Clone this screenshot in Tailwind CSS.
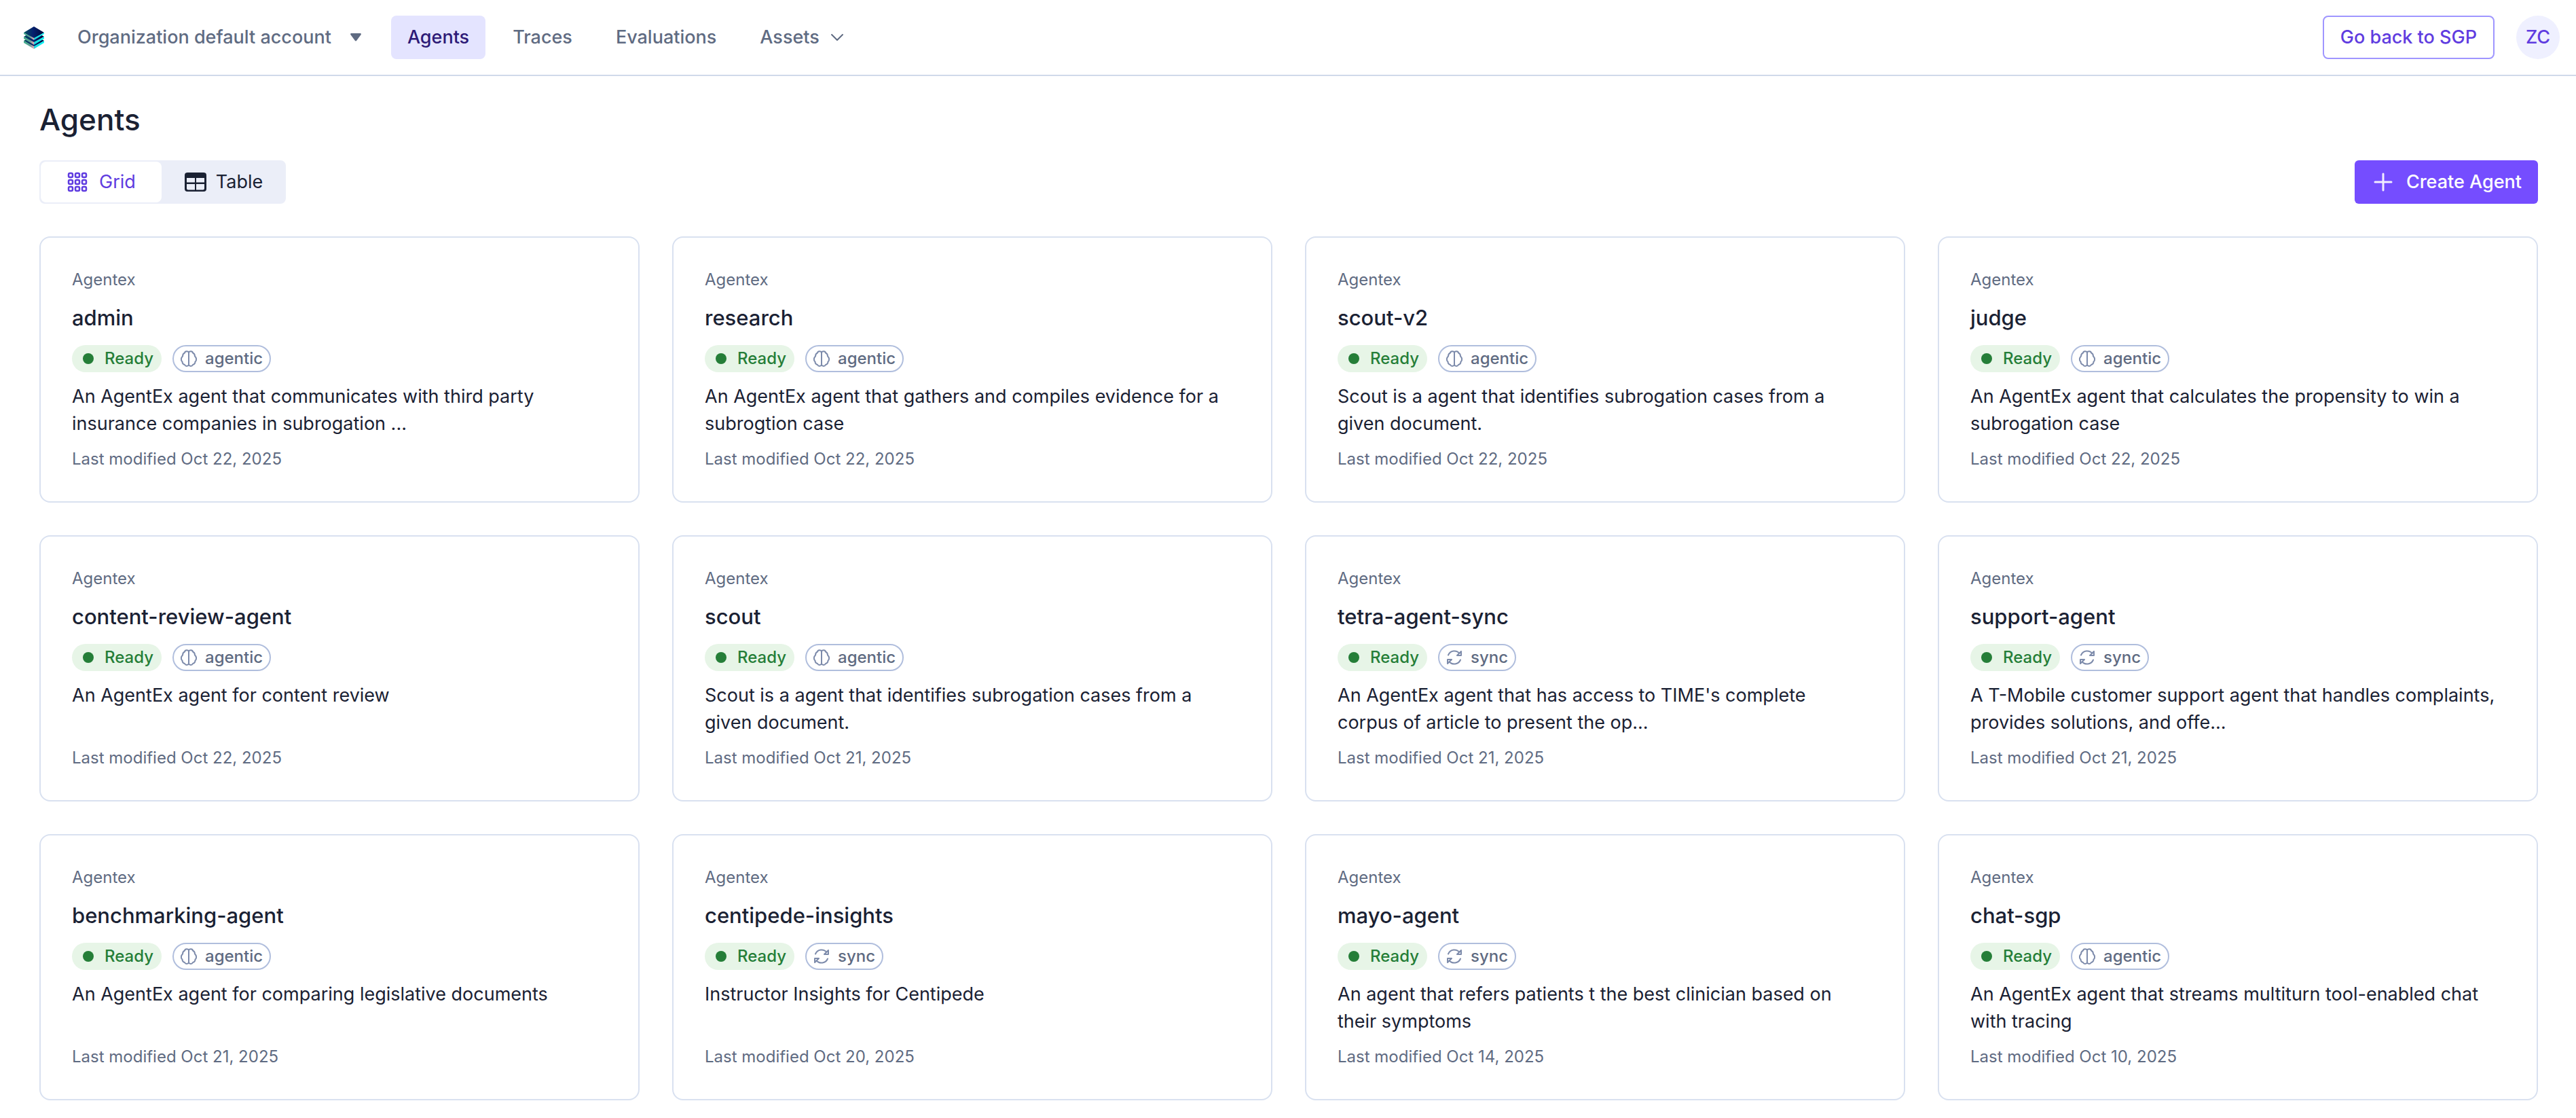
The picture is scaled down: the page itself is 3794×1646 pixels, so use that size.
<!DOCTYPE html>
<html lang="en">
<head>
  <meta charset="UTF-8" />
  <meta name="viewport" content="width=device-width, initial-scale=1.0"/>
  <title>Agents</title>
  <script src="https://cdn.jsdelivr.net/npm/@tailwindcss/browser@4"></script>
  <style>
    body {
      font-family: Inter, "Liberation Sans", sans-serif;
    }
  </style>
</head>
<body class="bg-white text-[#1a2133] text-[27px] leading-10">

  <!-- Top bar -->
  <header class="flex items-center justify-between border-b-2 border-[#d0d9ea] pl-[34px] pr-6 py-[23px]">
    <div class="flex items-center">
      <a href="#" aria-label="Home" class="mr-12">
        <svg class="w-8 h-9" viewBox="0 0 32 36">
          <defs>
            <linearGradient id="top" x1="0" y1="0" x2="1" y2="0">
              <stop offset="0" stop-color="#06505f"/>
              <stop offset="0.45" stop-color="#04216e"/>
              <stop offset="1" stop-color="#020638"/>
            </linearGradient>
            <linearGradient id="left" x1="0" y1="0" x2="1" y2="0">
              <stop offset="0" stop-color="#3fb08c"/>
              <stop offset="0.6" stop-color="#5f9d92"/>
              <stop offset="1" stop-color="#f2a3b5"/>
            </linearGradient>
            <linearGradient id="right" x1="0" y1="0" x2="1" y2="0">
              <stop offset="0" stop-color="#1fd6dc"/>
              <stop offset="1" stop-color="#0ff5f5"/>
            </linearGradient>
          </defs>
          <path d="M1 23l15-9 15 9-15 9z" fill="url(#top)"/>
          <path d="M1 23l15 8v4L1 26z" fill="url(#left)"/>
          <path d="M31 23l-15 8v4l15-9z" fill="url(#right)"/>
          <path d="M1 17l15-9 15 9-15 9z" fill="url(#top)"/>
          <path d="M1 17l15 8v4L1 20z" fill="url(#left)"/>
          <path d="M31 17l-15 8v4l15-9z" fill="url(#right)"/>
          <path d="M1 11L16 2l15 9-15 9z" fill="url(#top)"/>
          <path d="M1 11l15 8v3L1 13z" fill="url(#left)"/>
          <path d="M31 11l-15 8v3l15-9z" fill="url(#right)"/>
        </svg>
      </a>
      <button type="button" class="flex items-center gap-7 mr-11 font-medium text-[#5f6b82]">
        Organization default account
        <svg class="w-4 h-3" viewBox="0 0 16 12" fill="#5f6b82"><path d="M1.500 0h13c1.200 0 1.800 1.200 1 2.200L9.200 10.800c-.6.800-1.800.8-2.400 0L.5 2.200C-.3 1.200.3 0 1.500 0z"/></svg>
      </button>
      <nav class="flex items-center gap-4 font-medium text-[#5f6b82]">
        <a href="#" class="rounded-lg bg-[#e4e4ff] px-6 py-3 text-[#2d1a77]">Agents</a>
        <a href="#" class="px-6 py-3">Traces</a>
        <a href="#" class="px-6 py-3">Evaluations</a>
        <button type="button" class="flex items-center gap-4 px-6 py-3">
          Assets
          <svg class="w-5 h-3" viewBox="0 0 20 12" fill="none" stroke="#5f6b82" stroke-width="2" stroke-linecap="round" stroke-linejoin="round"><path d="M2 2l8 8 8-8"/></svg>
        </button>
      </nav>
    </div>
    <div class="flex items-center gap-8">
      <button type="button" class="rounded-lg border-2 border-[#9f96ff] px-6 py-[10px] font-medium text-[#5f3ce0]">Go back to SGP</button>
      <button type="button" class="size-16 rounded-full bg-[#eff0ff] font-medium text-[#5f3ce0]">ZC</button>
    </div>
  </header>

  <main class="pl-[58px] pr-14 pt-8 pb-6">
    <h1 class="text-[44px] leading-16 font-medium">Agents</h1>

    <!-- View switch and create button -->
    <div class="flex items-center justify-between mt-7 mb-12">
      <div class="flex rounded-lg border-2 border-[#ebeef8] bg-[#ebeef8]">
        <button type="button" class="flex items-center gap-4 rounded-lg bg-white px-[38px] py-[10px] text-[#5f3ce0]">
          <svg class="w-8 h-8" viewBox="0 0 32 32" fill="none" stroke="#5f3ce0" stroke-width="2.500">
            <rect x="3" y="3" width="6" height="6" rx="2"/><rect x="13" y="3" width="6" height="6" rx="2"/><rect x="23" y="3" width="6" height="6" rx="2"/>
            <rect x="3" y="13" width="6" height="6" rx="2"/><rect x="13" y="13" width="6" height="6" rx="2"/><rect x="23" y="13" width="6" height="6" rx="2"/>
            <rect x="3" y="23" width="6" height="6" rx="2"/><rect x="13" y="23" width="6" height="6" rx="2"/><rect x="23" y="23" width="6" height="6" rx="2"/>
          </svg>
          Grid
        </button>
        <button type="button" class="flex items-center gap-3 px-8 py-[10px]">
          <svg class="w-9 h-8" viewBox="0 0 36 32">
            <path fill="#1a2133" fill-rule="evenodd" d="M6 2h24a4 4 0 0 1 4 4v20a4 4 0 0 1-4 4H6a4 4 0 0 1-4-4V6a4 4 0 0 1 4-4zM5 10v6.500h12V10zM19 10v6.500h12V10zM5 19v6.500a2 2 0 0 0 2 2h10V19zM19 19v8.500h10a2 2 0 0 0 2-2V19z"/>
          </svg>
          Table
        </button>
      </div>
      <button type="button" class="flex items-center gap-4 rounded-md bg-[#754dff] px-6 py-3 font-medium text-white">
        <svg class="w-9 h-9" viewBox="0 0 36 36" fill="none" stroke="#f1ecff" stroke-width="3" stroke-linecap="round"><path d="M18 6v24M6 18h24"/></svg>
        Create Agent
      </button>
    </div>

    <!-- Agent cards -->
    <div id="agentGrid" class="grid grid-cols-4 gap-12"></div>
  </main>

  <script>
    const agents = [
      { name: "admin", type: "agentic", text: "An AgentEx agent that communicates with third party insurance companies in subrogation ...", date: "Oct 22, 2025" },
      { name: "research", type: "agentic", text: "An AgentEx agent that gathers and compiles evidence for a subrogtion case", date: "Oct 22, 2025" },
      { name: "scout-v2", type: "agentic", text: "Scout is a agent that identifies subrogation cases from a given document.", date: "Oct 22, 2025" },
      { name: "judge", type: "agentic", text: "An AgentEx agent that calculates the propensity to win a subrogation case", date: "Oct 22, 2025" },
      { name: "content-review-agent", type: "agentic", text: "An AgentEx agent for content review", date: "Oct 22, 2025" },
      { name: "scout", type: "agentic", text: "Scout is a agent that identifies subrogation cases from a given document.", date: "Oct 21, 2025" },
      { name: "tetra-agent-sync", type: "sync", text: "An AgentEx agent that has access to TIME's complete corpus of article to present the op...", date: "Oct 21, 2025" },
      { name: "support-agent", type: "sync", text: "A T-Mobile customer support agent that handles complaints, provides solutions, and offe...", date: "Oct 21, 2025" },
      { name: "benchmarking-agent", type: "agentic", text: "An AgentEx agent for comparing legislative documents", date: "Oct 21, 2025" },
      { name: "centipede-insights", type: "sync", text: "Instructor Insights for Centipede", date: "Oct 20, 2025" },
      { name: "mayo-agent", type: "sync", text: "An agent that refers patients t the best clinician based on their symptoms", date: "Oct 14, 2025" },
      { name: "chat-sgp", type: "agentic", text: "An AgentEx agent that streams multiturn tool-enabled chat with tracing", date: "Oct 10, 2025" }
    ];

    const icons = {
      agentic: `<svg class="size-6" viewBox="0 0 24 24" fill="none" stroke="#7d8bab" stroke-width="2" stroke-linejoin="round">
        <path d="M12 3C11 .5 6.500.5 6 3.500 3.500 4.500 3 7 3 8.500 0 11 .5 15 2.500 16.500 2.500 19 4 20.500 6 21c1 2.500 5 2.500 6 0zM12 3c1-2.500 5.500-2.500 6 .5 2.500 1 3 3.500 3 5 3 2.500 2.500 6.500.5 8 0 2.500-1.500 4-3.500 4.500-1 2.500-5 2.500-6 0z"/>
      </svg>`,
      sync: `<svg class="size-6" viewBox="0 0 24 24" fill="none" stroke="#7d8bab" stroke-width="2" stroke-linecap="round" stroke-linejoin="round">
        <path d="M3 8.500C6 1.500 15 .500 19.500 6M22 3v6h-6zM21 15.500C18 22.500 9 23.500 4.500 18M2 21v-6h6z"/>
      </svg>`
    };

    document.getElementById("agentGrid").innerHTML = agents.map(a => `
      <article class="flex flex-col gap-4 rounded-2xl border-2 border-[#d9e1f0] p-[46px]">
        <p class="text-[24px] leading-8 text-[#5f6b82]">Agentex</p>
        <h2 class="text-[31px] leading-12 font-medium">${a.name}</h2>
        <div class="flex gap-4 text-[24px] leading-9 font-medium">
          <span class="flex items-center gap-4 rounded-full bg-[#e7f5e7] pl-4 pr-3 py-[2px] text-[#257e38]">
            <span class="size-4 rounded-full bg-[#257e38]"></span>Ready
          </span>
          <span class="flex items-center gap-3 rounded-full border-2 border-[#b0bedd] px-[10px] text-[#5f6b82]">
            ${icons[a.type]}${a.type}
          </span>
        </div>
        <p class="min-h-20 pr-2">${a.text}</p>
        <p class="text-[24px] leading-8 text-[#5f6b82]">Last modified ${a.date}</p>
      </article>`).join("");
  </script>
</body>
</html>
